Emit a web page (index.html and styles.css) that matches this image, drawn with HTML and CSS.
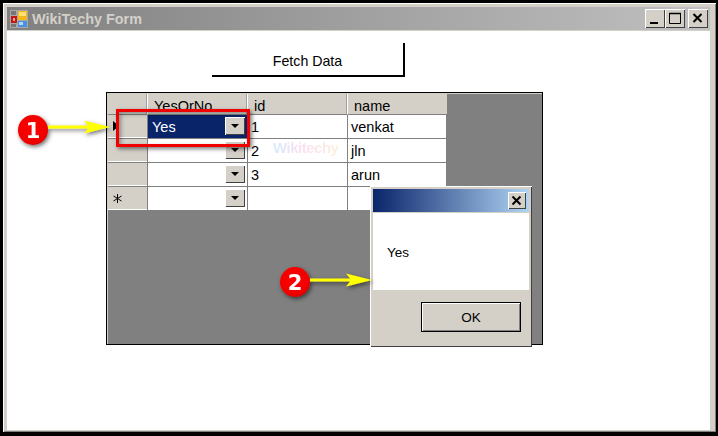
FILE: index.html
```html
<!DOCTYPE html>
<html lang="en">
<head>
<meta charset="utf-8">
<title>WikiTechy Form</title>
<link rel="stylesheet" href="styles.css">
</head>
<body>
<div class="window">
  <header class="titlebar">
    <svg class="app-icon" width="18" height="18" viewBox="0 0 18 18">
      <rect width="18" height="18" fill="#a8a8a8"/>
      <rect x="1" y="1" width="5" height="4" fill="#777"/>
      <rect x="1" y="6" width="6" height="7" fill="#c01a10"/>
      <rect x="3" y="8" width="2" height="3" fill="#f0a090"/>
      <rect x="1" y="14" width="5" height="3" fill="#777"/>
      <rect x="8" y="1" width="9" height="9" fill="#f0b818"/>
      <rect x="9" y="2" width="7" height="4" fill="#ffe070"/>
      <rect x="8" y="11" width="9" height="6" fill="#4a90e0"/>
      <rect x="9" y="12" width="4" height="3" fill="#b0d8ff"/>
    </svg>
    <span class="title">WikiTechy Form</span>
    <div class="controls">
      <span class="ctl"><svg width="20" height="19" viewBox="0 0 20 19"><rect x="5" y="13" width="8" height="2" fill="#000"/></svg></span>
      <span class="ctl"><svg width="20" height="19" viewBox="0 0 20 19"><path d="M4.500 4.500h11v10h-11z" fill="none" stroke="#000"/><path d="M4 4.500h12" stroke="#000" stroke-width="1.500"/></svg></span>
      <span class="ctl ctl-close"><svg width="20" height="19" viewBox="0 0 20 19"><path d="M5.500 5l8 8M13.500 5l-8 8" stroke="#000" stroke-width="2"/></svg></span>
    </div>
  </header>
  <main class="client">
    <div class="fetch"><span>Fetch Data</span></div>
    <div class="datagrid">
      <div class="table">
        <div class="hd"></div><div class="hd col">YesOrNo</div><div class="hd col">id</div><div class="hd col col-name">name</div>

        <div class="rh"><svg class="pointer" width="6" height="10" viewBox="0 0 6 10"><path d="M0 0l6 5-6 5z" fill="#000"/></svg></div>
        <div class="cell sel"><span class="sel-fill">Yes<span class="combo on"><i></i></span></span></div>
        <div class="cell">1</div><div class="cell">venkat</div>

        <div class="rh"></div>
        <div class="cell"><span class="combo"><i></i></span></div>
        <div class="cell">2</div><div class="cell">jln</div>

        <div class="rh"></div>
        <div class="cell"><span class="combo"><i></i></span></div>
        <div class="cell">3</div><div class="cell">arun</div>

        <div class="rh"><svg class="star" width="11" height="11" viewBox="0 0 11 11"><path d="M5.500 1v9M1.500 3l8 5M9.500 3l-8 5" stroke="#000" stroke-width="1"/></svg></div>
        <div class="cell"><span class="combo"><i></i></span></div>
        <div class="cell"></div><div class="cell"></div>
      </div>
    </div>
  </main>

  <div class="watermark">Wikitechy</div>

  <div class="dialog">
    <div class="dlg-title"><span class="ctl dlg-close"><svg width="18" height="17" viewBox="0 0 18 17"><path d="M4.500 4.500l8 8M12.500 4.500l-8 8" stroke="#000" stroke-width="2"/></svg></span></div>
    <div class="dlg-body">Yes</div>
    <div class="dlg-foot"><span class="ok">OK</span></div>
  </div>

  <div class="redbox"></div>

  <svg class="marks" width="718" height="436" viewBox="0 0 718 436">
    <defs>
      <filter id="sh" x="-30%" y="-60%" width="170%" height="240%"><feDropShadow dx="1.500" dy="2" stdDeviation="2" flood-color="#000" flood-opacity=".55"/></filter>
      <radialGradient id="red" cx=".45" cy=".4" r=".65"><stop offset="0" stop-color="#ff0000"/><stop offset=".8" stop-color="#f00000"/><stop offset="1" stop-color="#c80000"/></radialGradient>
    </defs>
    <g filter="url(#sh)">
      <path d="M48 125.500h40l-4-5 26 6.500-26 6.500 4-5h-40z" fill="#ffff00"/>
      <circle cx="33" cy="130" r="15" fill="url(#red)"/>
      <text class="num" x="33" y="137.500">1</text>
    </g>
    <g filter="url(#sh)">
      <path d="M310 278.500h40l-4-5 26 6.500-26 6.500 4-5h-40z" fill="#ffff00"/>
      <circle cx="295" cy="282" r="15" fill="url(#red)"/>
      <text class="num" x="295" y="289.500">2</text>
    </g>
  </svg>
</div>
</body>
</html>
```

FILE: styles.css
```css
* { box-sizing: border-box; }
html, body { margin: 0; padding: 0; background: #000; }
body { width: 718px; height: 436px; overflow: hidden; font-family: "Liberation Sans", Arial, sans-serif; font-size: 14.5px; color: #000; }

.window {
  position: relative;
  width: 718px;
  height: 436px;
  background: #d4d0c8;
  border-style: solid;
  border-color: #000;
  border-width: 3px 2px 4px 3px;
  padding: 3px 6px 2px 4px;
  display: flex;
  flex-direction: column;
  box-shadow: inset 1px 1px 0 #fff, inset -1px -1px 0 #808080;
}

.titlebar {
  height: 23px;
  flex: none;
  margin: 1px 0 1px;
  display: flex;
  align-items: center;
  padding: 0 2px 0 3px;
  background: linear-gradient(90deg, #808080, #c0c0c0);
}
.app-icon { flex: none; }
.title { margin-left: 4px; font-weight: bold; font-size: 14.4px; color: #d4d0c8; }
.controls { margin-left: auto; display: flex; align-items: center; gap: 0; }
.ctl {
  display: block;
  width: 20px;
  height: 19px;
  background: #d4d0c8;
  box-shadow: inset 1px 1px 0 #fff, inset -1px -1px 0 #404040;
}
.ctl svg { display: block; }
.ctl-close { margin-left: 3px; }

.client { flex: 1; background: #fff; padding-top: 12px; display: flex; flex-direction: column; }

.fetch {
  width: 193px;
  height: 34px;
  margin-left: 205px;
  flex: none;
  border-right: 2px solid #000;
  border-bottom: 2px solid #000;
  display: flex;
  align-items: center;
  justify-content: center;
}
.fetch span { font-size: 14.2px; padding-top: 3px; }

.datagrid {
  width: 437px;
  height: 253px;
  margin: 15px 0 0 99px;
  flex: none;
  background: #808080;
  border: 1px solid #000;
  padding: 1px 0 0 1px;
  box-shadow: inset 1px 1px 0 #d4d0c8;
}
.table {
  display: grid;
  grid-template-columns: 40px 100px 100px 99px;
  grid-template-rows: 21px 24px 24px 24px 24px;
  width: 339px;
}
.hd {
  background: #d4d0c8;
  border-right: 1px solid #fff;
  border-bottom: 1px solid #808080;
  box-shadow: inset -1px 0 0 #a0a0a0;
}
.col { padding: 5px 0 0 6px; line-height: 14px; }
.col-name { border-right: 0; box-shadow: none; }
.rh {
  position: relative;
  background: #d4d0c8;
  border-right: 1px solid #808080;
  border-bottom: 1px solid #808080;
  box-shadow: inset 0 -1px 0 #fff;
}
.pointer { position: absolute; left: 5px; top: 6px; }
.star { position: absolute; left: 4px; top: 6px; }
.cell {
  position: relative;
  background: #fff;
  border-right: 1px solid #808080;
  border-bottom: 1px solid #808080;
  padding: 5px 0 0 3px;
  line-height: 14px;
}
.sel { padding: 0; }
.sel-fill {
  position: relative;
  display: block;
  height: 23px;
  background: #0a246a;
  color: #fff;
  padding: 5px 0 0 4px;
}
.combo {
  position: absolute;
  right: 2px;
  top: 2px;
  width: 20px;
  height: 18px;
  background: #d4d0c8;
  box-shadow: inset 1px 1px 0 #fff, inset -1px -1px 0 #404040;
}
.combo i {
  position: absolute;
  left: 6px;
  top: 7px;
  border-style: solid;
  border-width: 4px 4px 0;
  border-color: #000 transparent transparent;
}

.watermark {
  position: absolute;
  left: 270px;
  top: 136px;
  font-size: 15px;
  font-weight: bold;
  letter-spacing: -0.5px;
  color: transparent;
  background: linear-gradient(90deg, #d4ecfb, #fbdff0 45%, #fdf0dc);
  -webkit-background-clip: text;
  background-clip: text;
}

.dialog {
  position: absolute;
  left: 367px;
  top: 183px;
  width: 162px;
  height: 161px;
  padding: 3px;
  background: #d4d0c8;
  display: flex;
  flex-direction: column;
  box-shadow: inset 1px 1px 0 #fff, inset -1px -1px 0 #404040;
}
.dlg-title {
  flex: none;
  height: 23px;
  margin-bottom: 1px;
  display: flex;
  justify-content: flex-end;
  align-items: center;
  padding-right: 3px;
  background: linear-gradient(90deg, #0a246a, #b0d4f4);
}
.dlg-close { width: 18px; height: 17px; margin: 0; }
.dlg-body {
  flex: none;
  height: 77px;
  background: #fff;
  padding: 32px 0 0 14px;
  line-height: 16px;
  font-size: 13.5px;
}
.dlg-foot { flex: 1; display: flex; justify-content: flex-end; align-items: flex-start; padding: 12px 8px 0 0; }
.ok {
  display: flex;
  align-items: center;
  justify-content: center;
  width: 100px;
  height: 30px;
  border: 1px solid #000;
  background: #d4d0c8;
  box-shadow: inset 1px 1px 0 #fff, inset -1px -1px 0 #808080;
  font-size: 13.5px;
}

.redbox {
  position: absolute;
  left: 113px;
  top: 106px;
  width: 134px;
  height: 38px;
  border: 3px solid #f00000;
  box-shadow: 2px 2px 4px rgba(0,0,0,.5), inset 2px 2px 4px rgba(0,0,0,.35);
}

.marks { position: absolute; left: -3px; top: -3px; pointer-events: none; }
.num { font-family: "DejaVu Sans", sans-serif; font-weight: bold; font-size: 21px; fill: #fff; text-anchor: middle; }
```
